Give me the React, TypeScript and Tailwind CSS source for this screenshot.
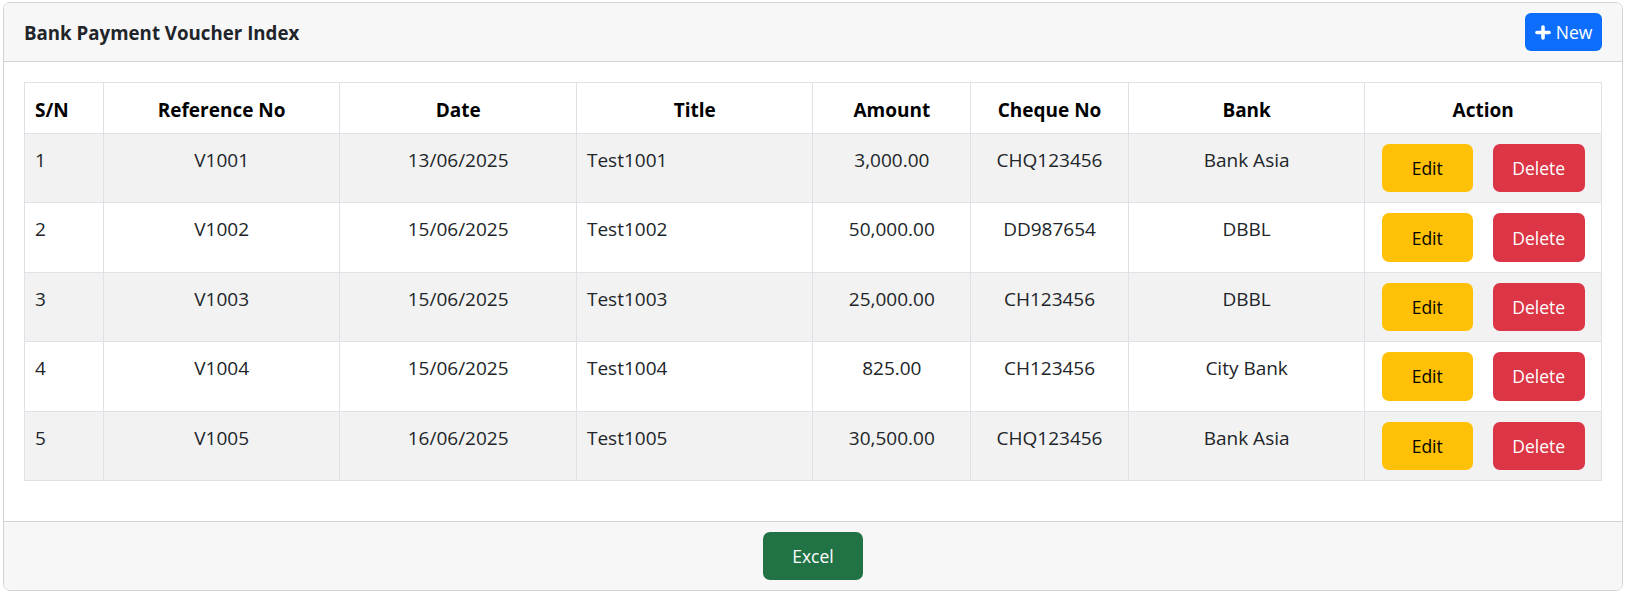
const rows = [
  { sn: 1, ref: "V1001", date: "13/06/2025", title: "Test1001", amount: "3,000.00", cheque: "CHQ123456", bank: "Bank Asia" },
  { sn: 2, ref: "V1002", date: "15/06/2025", title: "Test1002", amount: "50,000.00", cheque: "DD987654", bank: "DBBL" },
  { sn: 3, ref: "V1003", date: "15/06/2025", title: "Test1003", amount: "25,000.00", cheque: "CH123456", bank: "DBBL" },
  { sn: 4, ref: "V1004", date: "15/06/2025", title: "Test1004", amount: "825.00", cheque: "CH123456", bank: "City Bank" },
  { sn: 5, ref: "V1005", date: "16/06/2025", title: "Test1005", amount: "30,500.00", cheque: "CHQ123456", bank: "Bank Asia" },
];

function PlusIcon() {
  return (
    <svg width="16" height="15" viewBox="0 0 16 15" className="mr-[5px] mt-[1px]">
      <line x1="2" y1="7.5" x2="14" y2="7.5" stroke="white" strokeWidth="3.6" strokeLinecap="round" />
      <line x1="8" y1="2" x2="8" y2="13" stroke="white" strokeWidth="3.6" strokeLinecap="round" />
    </svg>
  );
}

const th = "border border-[#dee2e6] px-[10px] pt-[12px] pb-[8px] font-bold leading-[30px] text-black";
const td = "border border-[#dee2e6] px-[10px] py-[10px] align-top leading-[32px]";

export default function App() {
  return (
    <div className="min-h-screen bg-white pt-[2px] pl-[3px] font-['Open_Sans',sans-serif] text-[19px] text-[#212529]">
      <div className="w-[1620px] overflow-hidden rounded-[7px] border border-[#d3d3d3] bg-white">
        <div className="flex items-center justify-between border-b border-[#d3d3d3] bg-[#f7f7f7] px-[20px] py-[10px]">
          <h5 className="pt-[2px] text-[18.7px] font-bold">Bank Payment Voucher Index</h5>
          <button className="flex h-[38px] w-[77px] items-center justify-center rounded-[6px] bg-[#0d6efd] text-[17.5px] text-white">
            <PlusIcon />
            New
          </button>
        </div>

        <div className="px-[20px] pt-[20px] pb-[40px]">
          <table className="w-full table-fixed border-collapse">
            <thead>
              <tr>
                <th className={`${th} w-[5%] text-left`}>S/N</th>
                <th className={`${th} w-[15%] text-center`}>Reference No</th>
                <th className={`${th} w-[15%] text-center`}>Date</th>
                <th className={`${th} w-[15%] text-center`}>Title</th>
                <th className={`${th} w-[10%] text-center`}>Amount</th>
                <th className={`${th} w-[10%] text-center`}>Cheque No</th>
                <th className={`${th} w-[15%] text-center`}>Bank</th>
                <th className={`${th} w-[15%] text-center`}>Action</th>
              </tr>
            </thead>
            <tbody>
              {rows.map((r, i) => (
                <tr key={r.sn} className={i % 2 === 0 ? "bg-[#f2f2f2]" : "bg-white"}>
                  <td className={`${td} text-left`}>{r.sn}</td>
                  <td className={`${td} text-center`}>{r.ref}</td>
                  <td className={`${td} text-center`}>{r.date}</td>
                  <td className={`${td} text-left`}>{r.title}</td>
                  <td className={`${td} text-center`}>{r.amount}</td>
                  <td className={`${td} text-center`}>{r.cheque}</td>
                  <td className={`${td} text-center`}>{r.bank}</td>
                  <td className={`${td}`}>
                    <div className="flex justify-center gap-[20px]">
                      <button className="h-[48.4px] w-[91px] rounded-[7px] bg-[#ffc107] text-[17.5px] text-black">
                        Edit
                      </button>
                      <button className="h-[48.4px] w-[92px] rounded-[7px] bg-[#dc3545] text-[17.5px] text-white">
                        Delete
                      </button>
                    </div>
                  </td>
                </tr>
              ))}
            </tbody>
          </table>
        </div>

        <div className="flex justify-center border-t border-[#d3d3d3] bg-[#f7f7f7] py-[10px]">
          <button className="h-[48px] w-[100px] rounded-[7px] bg-[#217346] text-[17.5px] text-white">
            Excel
          </button>
        </div>
      </div>
    </div>
  );
}
